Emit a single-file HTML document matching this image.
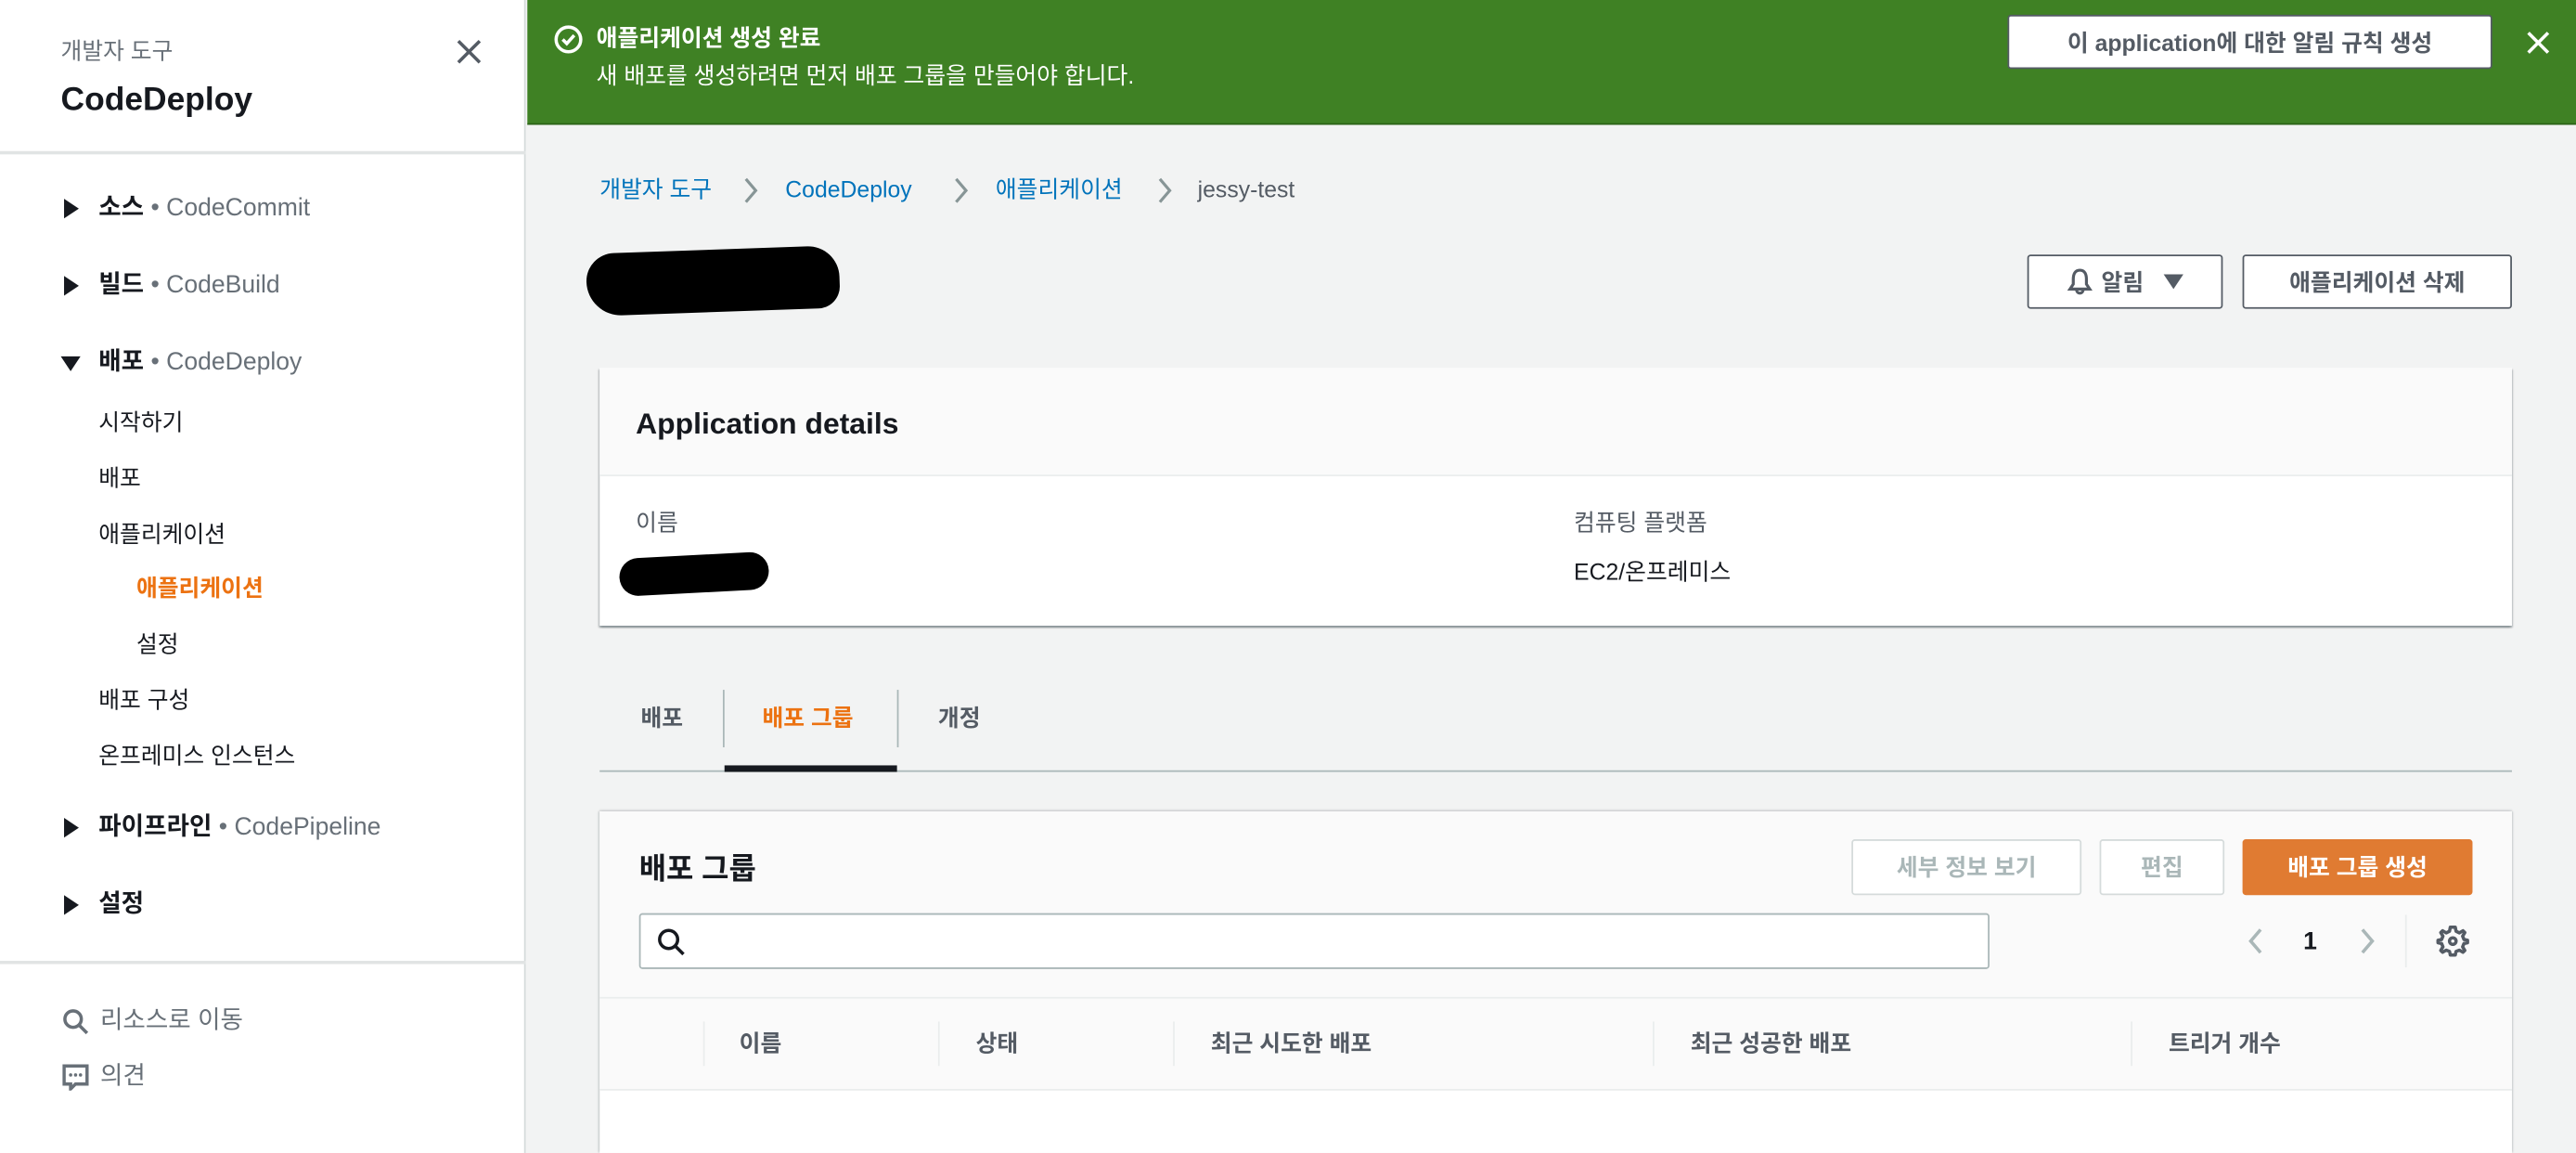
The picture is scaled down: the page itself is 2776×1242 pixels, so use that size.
<!DOCTYPE html>
<html><head><meta charset="utf-8"><style>
*{margin:0;padding:0;box-sizing:border-box}
html,body{width:2776px;height:1242px;overflow:hidden;background:#f2f3f3}
#w{position:absolute;left:0;top:0;width:1568px;height:702px;overflow:hidden;transform:scale(1.77041,1.7692);transform-origin:0 0;font-family:"Liberation Sans","Noto Sans CJK KR",sans-serif;color:#16191f;font-size:14px}
.a{position:absolute;white-space:nowrap;line-height:1}
.g{color:#687078}
.b{font-weight:bold}
.btn{position:absolute;border:1px solid #545b64;background:#fff;border-radius:2px;font-weight:bold;color:#545b64;display:flex;align-items:center;justify-content:center;font-size:14px}
.tri{position:absolute;width:0;height:0}
</style></head><body><div id="w">
<!-- sidebar -->
<div class="a" style="left:0;top:0;width:320px;height:702px;background:#fff;border-right:1px solid #d5dbdb"></div>
<div class="a g" style="left:37px;top:24px;font-size:14px">개발자 도구</div>
<div class="a b" style="left:37px;top:51px;font-size:20px">CodeDeploy</div>
<svg class="a" style="left:277px;top:23px" width="17" height="17" viewBox="0 0 17 17"><path d="M2 2L15 15M15 2L2 15" stroke="#545b64" stroke-width="2"/></svg>
<div class="a" style="left:0;top:92px;width:320px;height:2px;background:#e1e4e4"></div>
<div class="tri" style="left:39px;top:121px;border-left:9px solid #16191f;border-top:6px solid transparent;border-bottom:6px solid transparent"></div>
<div class="a" style="left:60px;top:119px;font-size:15px"><b>소스</b> <span class="g">• CodeCommit</span></div>
<div class="tri" style="left:39px;top:168px;border-left:9px solid #16191f;border-top:6px solid transparent;border-bottom:6px solid transparent"></div>
<div class="a" style="left:60px;top:166px;font-size:15px"><b>빌드</b> <span class="g">• CodeBuild</span></div>
<div class="tri" style="left:37px;top:217px;border-top:9px solid #16191f;border-left:6px solid transparent;border-right:6px solid transparent"></div>
<div class="a" style="left:60px;top:213px;font-size:15px"><b>배포</b> <span class="g">• CodeDeploy</span></div>
<div class="a" style="left:60px;top:250px">시작하기</div>
<div class="a" style="left:60px;top:284px">배포</div>
<div class="a" style="left:60px;top:318px">애플리케이션</div>
<div class="a b" style="left:83px;top:351px;color:#ec7211">애플리케이션</div>
<div class="a" style="left:83px;top:385px">설정</div>
<div class="a" style="left:60px;top:419px">배포 구성</div>
<div class="a" style="left:60px;top:453px">온프레미스 인스턴스</div>
<div class="tri" style="left:39px;top:498px;border-left:9px solid #16191f;border-top:6px solid transparent;border-bottom:6px solid transparent"></div>
<div class="a" style="left:60px;top:496px;font-size:15px"><b>파이프라인</b> <span class="g">• CodePipeline</span></div>
<div class="tri" style="left:39px;top:545px;border-left:9px solid #16191f;border-top:6px solid transparent;border-bottom:6px solid transparent"></div>
<div class="a b" style="left:60px;top:543px;font-size:15px">설정</div>
<div class="a" style="left:0;top:585px;width:320px;height:2px;background:#e1e4e4"></div>
<svg class="a" style="left:38px;top:614px" width="16" height="16" viewBox="0 0 16 16"><circle cx="6.5" cy="6.5" r="5" fill="none" stroke="#687078" stroke-width="2"/><path d="M10 10L15 15" stroke="#687078" stroke-width="2"/></svg>
<div class="a g" style="left:61px;top:614px;font-size:15px">리소스로 이동</div>
<svg class="a" style="left:38px;top:648px" width="16" height="16" viewBox="0 0 16 16"><path d="M1 1H15V12H8L5 15V12H1Z" fill="none" stroke="#687078" stroke-width="2"/><circle cx="5" cy="6.5" r="1" fill="#687078"/><circle cx="8" cy="6.5" r="1" fill="#687078"/><circle cx="11" cy="6.5" r="1" fill="#687078"/></svg>
<div class="a g" style="left:61px;top:648px;font-size:15px">의견</div>
<!-- banner -->
<div class="a" style="left:321px;top:0;width:1247px;height:76px;background:#3f8124;border-bottom:1px solid #2c6317"></div>
<svg class="a" style="left:337px;top:15px" width="18" height="18" viewBox="0 0 18 18"><circle cx="9" cy="9" r="7.5" fill="none" stroke="#fff" stroke-width="2"/><path d="M5.5 9L8 11.5L12.5 6.5" fill="none" stroke="#fff" stroke-width="2"/></svg>
<div class="a b" style="left:363px;top:16px;color:#fff">애플리케이션 생성 완료</div>
<div class="a" style="left:363px;top:39px;color:#fff">새 배포를 생성하려면 먼저 배포 그룹을 만들어야 합니다.</div>
<div class="btn" style="left:1222px;top:9px;width:295px;height:33px;color:#545b64;border-color:#545b64">이 application에 대한 알림 규칙 생성</div>
<svg class="a" style="left:1537px;top:18px" width="16" height="16" viewBox="0 0 16 16"><path d="M2 2L14 14M14 2L2 14" stroke="#fff" stroke-width="2"/></svg>
<!-- breadcrumb -->
<div class="a" style="left:365px;top:108px;color:#0073bb">개발자 도구</div>
<div class="a" style="left:478px;top:108px;color:#0073bb">CodeDeploy</div>
<div class="a" style="left:606px;top:108px;color:#0073bb">애플리케이션</div>
<div class="a" style="left:729px;top:108px;color:#545b64">jessy-test</div>
<svg class="a" style="left:452px;top:107px" width="10" height="18"><path d="M2 2L8 9L2 16" fill="none" stroke="#879596" stroke-width="1.8"/></svg>
<svg class="a" style="left:580px;top:107px" width="10" height="18"><path d="M2 2L8 9L2 16" fill="none" stroke="#879596" stroke-width="1.8"/></svg>
<svg class="a" style="left:704px;top:107px" width="10" height="18"><path d="M2 2L8 9L2 16" fill="none" stroke="#879596" stroke-width="1.8"/></svg>
<div class="a" style="left:357px;top:152px;width:154px;height:38px;background:#000;border-radius:18px 20px 14px 22px;transform:rotate(-2deg)"></div>
<div class="btn" style="left:1234px;top:155px;width:119px;height:33px"><svg width="16" height="17" viewBox="0 0 16 17" style="margin-right:5px"><path d="M8 1.5C5 1.5 4 4 4 7V10L2 13H14L12 10V7C12 4 11 1.5 8 1.5Z M6 13.5A2 2 0 0 0 10 13.5" fill="none" stroke="#545b64" stroke-width="1.8"/></svg>알림<span style="margin-left:12px;width:0;height:0;border-top:9px solid #545b64;border-left:6px solid transparent;border-right:6px solid transparent"></span></div>
<div class="btn" style="left:1365px;top:155px;width:164px;height:33px">애플리케이션 삭제</div>
<!-- card1 -->
<div class="a" style="left:365px;top:224px;width:1164px;height:157px;background:#fff;box-shadow:0 1px 1px rgba(0,28,36,.3),1px 1px 1px rgba(0,28,36,.15),-1px 1px 1px rgba(0,28,36,.15)"></div>
<div class="a" style="left:365px;top:224px;width:1164px;height:66px;background:#fafafa;border-bottom:1px solid #eaeded"></div>
<div class="a b" style="left:387px;top:249px;font-size:18px">Application details</div>
<div class="a g" style="left:387px;top:311px;color:#545b64">이름</div>
<div class="a" style="left:377px;top:338px;width:91px;height:23px;background:#000;border-radius:12px;transform:rotate(-3deg)"></div>
<div class="a" style="left:958px;top:311px;color:#545b64">컴퓨팅 플랫폼</div>
<div class="a" style="left:958px;top:341px">EC2/온프레미스</div>
<!-- tabs -->
<div class="a b" style="left:390px;top:430px;color:#545b64">배포</div>
<div class="a" style="left:440px;top:420px;width:1px;height:35px;background:#aab7b8"></div>
<div class="a b" style="left:464px;top:430px;color:#ec7211">배포 그룹</div>
<div class="a" style="left:546px;top:420px;width:1px;height:35px;background:#aab7b8"></div>
<div class="a b" style="left:571px;top:430px;color:#545b64">개정</div>
<div class="a" style="left:365px;top:469px;width:1164px;height:1px;background:#aab7b8"></div>
<div class="a" style="left:441px;top:466px;width:105px;height:4px;background:#16191f"></div>
<!-- card2 -->
<div class="a" style="left:365px;top:494px;width:1164px;height:208px;background:#fff;box-shadow:1px 0 1px rgba(0,28,36,.15),-1px 0 1px rgba(0,28,36,.15),0 -1px 1px rgba(0,28,36,.1)"></div>
<div class="a" style="left:365px;top:494px;width:1164px;height:114px;background:#fafafa"></div>
<div class="a b" style="left:389px;top:520px;font-size:18px">배포 그룹</div>
<div class="btn" style="left:1127px;top:511px;width:140px;height:34px;border-color:#d5dbdb;color:#aab7b8">세부 정보 보기</div>
<div class="btn" style="left:1278px;top:511px;width:76px;height:34px;border-color:#d5dbdb;color:#aab7b8">편집</div>
<div class="btn" style="left:1365px;top:511px;width:140px;height:34px;border-color:#e07b32;background:#e07b32;color:#fff">배포 그룹 생성</div>
<div class="a" style="left:389px;top:556px;width:822px;height:34px;background:#fff;border:1px solid #aab7b8;border-radius:2px"></div>
<svg class="a" style="left:400px;top:565px" width="17" height="17" viewBox="0 0 17 17"><circle cx="7" cy="7" r="5.5" fill="none" stroke="#16191f" stroke-width="2"/><path d="M11 11L16 16" stroke="#16191f" stroke-width="2"/></svg>
<svg class="a" style="left:1367px;top:564px" width="12" height="18"><path d="M9 2L3 9L9 16" fill="none" stroke="#aab7b8" stroke-width="2"/></svg>
<div class="a b" style="left:1402px;top:566px;font-size:15px">1</div>
<svg class="a" style="left:1435px;top:564px" width="12" height="18"><path d="M3 2L9 9L3 16" fill="none" stroke="#aab7b8" stroke-width="2"/></svg>
<div class="a" style="left:1464px;top:557px;width:1px;height:32px;background:#eaeded"></div>
<svg class="a" style="left:1483px;top:563px" width="20" height="20" viewBox="0 0 20 20"><path d="M10 2.5L11.5 2.5L12 5L14 6L16.2 4.7L17.3 5.8L16 8L16.8 10L19 10.5V12L16.8 12.5L16 14.5L17.3 16.7L16.2 17.8L14 16.5L12 17.3L11.5 19.5H8.5L8 17.3L6 16.5L3.8 17.8L2.7 16.7L4 14.5L3.2 12.5L1 12V10.5L3.2 10L4 8L2.7 5.8L3.8 4.7L6 6L8 5L8.5 2.5Z" transform="translate(0,-1)" fill="none" stroke="#545b64" stroke-width="2" stroke-linejoin="round"/><circle cx="10" cy="10" r="2" fill="none" stroke="#545b64" stroke-width="2"/></svg>
<div class="a" style="left:365px;top:607px;width:1164px;height:57px;background:#fafafa;border-top:1px solid #eaeded;border-bottom:1px solid #eaeded"></div>
<div class="a" style="left:428px;top:622px;width:1px;height:27px;background:#eaeded"></div>
<div class="a" style="left:571px;top:622px;width:1px;height:27px;background:#eaeded"></div>
<div class="a" style="left:714px;top:622px;width:1px;height:27px;background:#eaeded"></div>
<div class="a" style="left:1006px;top:622px;width:1px;height:27px;background:#eaeded"></div>
<div class="a" style="left:1297px;top:622px;width:1px;height:27px;background:#eaeded"></div>
<div class="a b" style="left:450px;top:628px;color:#545b64">이름</div>
<div class="a b" style="left:594px;top:628px;color:#545b64">상태</div>
<div class="a b" style="left:737px;top:628px;color:#545b64">최근 시도한 배포</div>
<div class="a b" style="left:1029px;top:628px;color:#545b64">최근 성공한 배포</div>
<div class="a b" style="left:1320px;top:628px;color:#545b64">트리거 개수</div>
</div></body></html>
